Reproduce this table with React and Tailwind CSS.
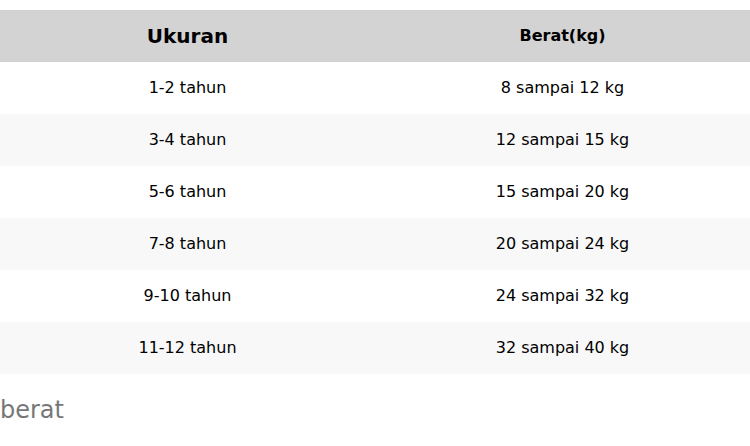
const rows = [
  ["1-2 tahun", "8 sampai 12 kg"],
  ["3-4 tahun", "12 sampai 15 kg"],
  ["5-6 tahun", "15 sampai 20 kg"],
  ["7-8 tahun", "20 sampai 24 kg"],
  ["9-10 tahun", "24 sampai 32 kg"],
  ["11-12 tahun", "32 sampai 40 kg"],
];

export default function App() {
  return (
    <div className="w-[750px] h-[446px] bg-white overflow-hidden font-['DejaVu_Sans',sans-serif] text-black">
      <table className="w-full mt-[10px] border-collapse">
        <thead>
          <tr className="h-[52px] bg-[#d3d3d3]">
            <th className="w-1/2 text-[20px] font-bold text-center">Ukuran</th>
            <th className="w-1/2 text-[16px] font-bold text-center">Berat(kg)</th>
          </tr>
        </thead>
        <tbody>
          {rows.map((r, i) => (
            <tr
              key={i}
              className={"h-[52px] " + (i % 2 === 1 ? "bg-[#f8f8f8]" : "bg-white")}
            >
              <td className="text-center text-[16px]">{r[0]}</td>
              <td className="text-center text-[16px]">{r[1]}</td>
            </tr>
          ))}
        </tbody>
      </table>
      <p className="mt-[22px] text-[24px] leading-[28px] text-[#777777]">berat</p>
    </div>
  );
}
